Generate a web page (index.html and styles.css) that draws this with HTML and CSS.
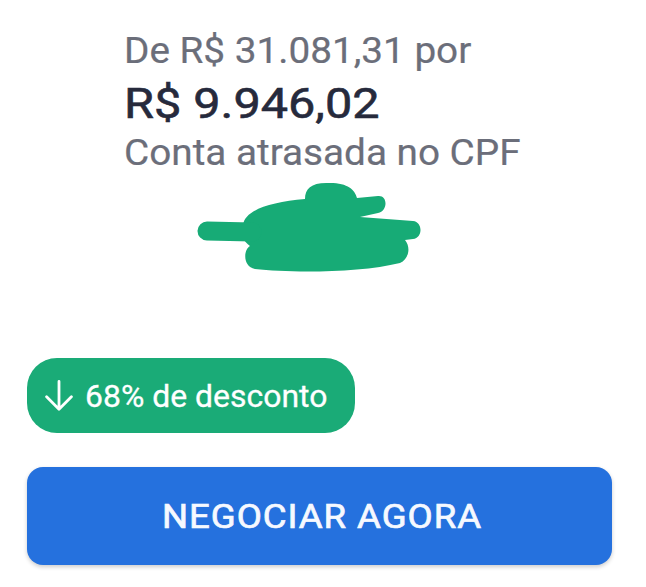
FILE: index.html
```html
<!DOCTYPE html>
<html lang="pt-BR">
<head>
<meta charset="utf-8">
<link rel="stylesheet" href="styles.css">
</head>
<body>
<div class="page">
  <div class="info">
    <div class="line from"><span class="wide">De R$ 31.081,31 por</span></div>
    <div class="line price"><span class="wide-more">R$ 9.946,02</span></div>
    <div class="line desc"><span class="wide">Conta atrasada no CPF</span></div>
  </div>
  <div class="redact">
    <svg width="230" height="100" viewBox="195 178 230 100" aria-hidden="true">
      <path fill="#17ab76" d="M243 225 C 245 210, 270 202, 305 199 C 305 188, 312 182, 330 183 C 348 183, 355 190, 357 198 L 378 196 C 388 195, 388 211, 378 213 L 360 217 L 413 221 C 423 222, 423 238, 413 239 L 405 240 C 411 247, 409 259, 400 263 C 360 273, 290 273, 255 269 C 243 267, 243 250, 250 246 C 241 240, 240 230, 243 225 Z"/>
      <path d="M207 231 L 252 232" stroke="#17ab76" stroke-width="19" stroke-linecap="round" fill="none"/>
    </svg>
  </div>
  <div class="badge">
    <svg class="arrow" width="28" height="31" viewBox="0 0 28 31" aria-hidden="true">
      <path d="M14 1.5 V29.3 M1.6 16.8 L14 29.3 L26.4 16.8" stroke="#fff" stroke-width="2.8" fill="none" stroke-linecap="round" stroke-linejoin="round"/>
    </svg>
    <span class="badge-text">68% de desconto</span>
  </div>
  <button class="cta"><span class="wide">NEGOCIAR AGORA</span></button>
</div>
</body>
</html>
```

FILE: styles.css
```css
html, body {
  margin: 0;
  padding: 0;
  background: #ffffff;
}
.page {
  width: 646px;
  height: 587px;
  overflow: hidden;
  font-family: Roboto, "Noto Sans", sans-serif;
  padding: 0 34px 0 27px;
  box-sizing: border-box;
}
.wide {
  display: inline-block;
  transform: scaleX(1.075);
  transform-origin: left center;
}
.wide-more {
  display: inline-block;
  transform: scaleX(1.13);
  transform-origin: left center;
}
.info {
  padding-left: 97px;
  padding-top: 29px;
}
.line { white-space: nowrap; }
.from {
  font-size: 36px;
  line-height: 44px;
  height: 44px;
  color: #6b6e7a;
  -webkit-text-stroke: 0.2px #6b6e7a;
}
.price {
  font-size: 43px;
  line-height: 60px;
  height: 60px;
  font-weight: 400;
  color: #262a3c;
  -webkit-text-stroke: 0.6px #262a3c;
}
.desc {
  font-size: 36px;
  line-height: 40px;
  height: 40px;
  color: #6b6e7a;
  -webkit-text-stroke: 0.2px #6b6e7a;
}
.redact {
  margin-left: 168px;
  margin-top: 5px;
  height: 100px;
}
.redact svg { display: block; }
.badge {
  margin-top: 80px;
  display: flex;
  align-items: center;
  gap: 12px;
  width: 328px;
  height: 75px;
  padding: 0 0 0 18px;
  border-radius: 30px;
  background: #1aab77;
  color: #ffffff;
  font-size: 31px;
  box-sizing: border-box;
  -webkit-text-stroke: 0.3px #ffffff;
}
.badge-text {
  display: inline-block;
  white-space: nowrap;
  transform: scaleX(1.03);
  transform-origin: left center;
  margin-top: 1px;
}
.arrow { display: block; flex: none; }
.cta {
  display: flex;
  align-items: center;
  justify-content: flex-start;
  margin-top: 34px;
  width: 585px;
  height: 98px;
  padding: 0 0 0 135px;
  border: none;
  border-radius: 16px;
  background: #2571de;
  color: #f6f9ff;
  font-family: Roboto, "Noto Sans", sans-serif;
  font-size: 34px;
  font-weight: 400;
  letter-spacing: 0.9px;
  -webkit-text-stroke: 0.7px #f6f9ff;
  box-shadow: 0 2px 4px rgba(0,0,0,0.2);
  box-sizing: border-box;
}
```
